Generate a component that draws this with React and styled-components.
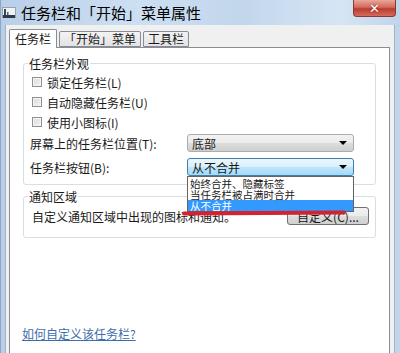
import React from 'react';
import styled, { createGlobalStyle } from 'styled-components';

const GlobalStyle = createGlobalStyle`
	html, body {
		margin: 0;
		padding: 0;
		background: #fff;
	}
	body {
		font-family: "Noto Sans CJK SC", "Noto Sans", sans-serif;
		font-size: 12px;
		color: #1a1a1a;
	}
`;

const Window = styled.div`
	width: 400px;
	height: 353px;
	overflow: hidden;
	display: flex;
	flex-direction: column;
	background: linear-gradient(to right, #b9cfe8, #cddff2 35%, #c2d6ec 60%, #d6e5f4 85%, #c0d4ea);
	border-left: 1px solid #8ea6c2;
	box-sizing: border-box;
`;

const TitleBar = styled.div`
	height: 25px;
	flex: none;
	display: flex;
	align-items: center;
	padding-left: 1px;
	position: relative;
`;

const Title = styled.div`
	font-size: 15px;
	color: #000;
	margin-left: 5px;
`;

const CloseButton = styled.div`
	position: absolute;
	top: 0;
	right: 4px;
	width: 43px;
	height: 17px;
	box-sizing: border-box;
	border: 1px solid #8a3a33;
	border-top: none;
	border-radius: 0 0 4px 4px;
	background: linear-gradient(to bottom, #e9a898, #d26a5c 45%, #bb3b30 55%, #d46d5a);
	display: flex;
	align-items: center;
	justify-content: center;
	color: #fff;
	font-family: "DejaVu Sans", sans-serif;
	font-weight: bold;
	font-size: 13px;
	text-shadow: 0 0 2px #7a1f18;
`;

const Frame = styled.div`
	flex: 1;
	display: flex;
	padding: 0 5px 0 4px;
	min-height: 0;
`;

const Client = styled.div`
	flex: 1;
	display: flex;
	flex-direction: column;
	background: #f0f0f0;
	padding: 4px 4px 0 3px;
	border-left: 1px solid #9fb2c8;
	border-right: 1px solid #9fb2c8;
`;

const TabStrip = styled.div`
	display: flex;
	align-items: flex-end;
	height: 18px;
	position: relative;
	z-index: 1;
`;

const Tab = styled.div`
	box-sizing: border-box;
	height: ${(p) => (p.$active ? '19px' : '16px')};
	margin-bottom: ${(p) => (p.$active ? '-1px' : '0')};
	margin-right: 2px;
	padding: 0 ${(p) => (p.$active ? '5px' : '4px')};
	border: 1px solid #898c95;
	border-bottom: ${(p) => (p.$active ? 'none' : '1px solid #898c95')};
	border-radius: 2px 2px 0 0;
	background: ${(p) => (p.$active ? '#fff' : 'linear-gradient(to bottom, #f3f3f3, #e3e3e3)')};
	font-size: 12px;
	line-height: ${(p) => (p.$active ? '18px' : '14px')};
	white-space: nowrap;
`;

const Panel = styled.div`
	flex: 1;
	display: flex;
	flex-direction: column;
	background: #fff;
	border: 1px solid #898c95;
	border-bottom: none;
	padding: 7px 13px 11px 13px;
	position: relative;
`;

const Group = styled.fieldset`
	margin: 0;
	padding: 0 6px ${(p) => p.$bottom || '8px'} 6px;
	border: 1px solid #d5dfe5;
	border-radius: 3px;
	& + & {
		margin-top: 3px;
	}
`;

const Legend = styled.legend`
	padding: 0 1px;
	margin-left: -2px;
	font-size: 12px;
	line-height: 17px;
`;

const CheckRow = styled.label`
	display: flex;
	align-items: center;
	height: 20px;
	padding-left: 2px;
	font-size: 12px;
`;

const Box = styled.span`
	width: 10px;
	height: 10px;
	box-sizing: border-box;
	border: 1px solid #8f8f8f;
	background: linear-gradient(135deg, #d9d9d9, #f4f4f4);
	box-shadow: inset 0 0 0 1px #f6f6f6;
	margin-right: 5px;
`;

const SelectRow = styled.div`
	display: flex;
	align-items: center;
	height: 18px;
	margin-top: ${(p) => p.$top || '2px'};
`;

const RowLabel = styled.div`
	width: 157px;
	font-size: 12px;
`;

const SelectWrap = styled.div`
	position: relative;
	width: 167px;
	height: 18px;
`;

const Select = styled.div`
	box-sizing: border-box;
	height: 100%;
	display: flex;
	align-items: center;
	justify-content: space-between;
	padding: 0 6px 0 4px;
	border: 1px solid ${(p) => (p.$focus ? '#3c7fb1' : '#acacac')};
	border-radius: 3px;
	background: ${(p) =>
		p.$focus
			? 'linear-gradient(to bottom, #eaf6fd, #d9f0fc 50%, #bee6fd 51%, #a7d9f5)'
			: 'linear-gradient(to bottom, #f2f2f2, #ebebeb 50%, #dddddd 51%, #cfcfcf)'};
	font-size: 12px;
`;

const Arrow = styled.span`
	width: 0;
	height: 0;
	border-left: 4px solid transparent;
	border-right: 4px solid transparent;
	border-top: 4px solid #000;
`;

const List = styled.div`
	position: absolute;
	left: 0;
	top: 100%;
	width: 100%;
	box-sizing: border-box;
	border: 1px solid #646464;
	background: #fff;
	z-index: 3;
	padding-top: 1px;
`;

const Item = styled.div`
	font-size: 10.5px;
	line-height: 11px;
	height: 11px;
	padding-left: 2px;
	background: ${(p) => (p.$selected ? '#3399ff' : 'transparent')};
	color: ${(p) => (p.$selected ? '#fff' : '#1a1a1a')};
	white-space: nowrap;
`;

const Mark = styled.div`
	position: absolute;
	left: -6px;
	bottom: -4px;
	width: 164px;
	height: 4px;
	background: #d2232e;
	border-radius: 2px;
	transform: rotate(-0.4deg);
	z-index: 4;
`;

const NotifyRow = styled.div`
	display: flex;
	align-items: center;
	justify-content: space-between;
	height: 22px;
	padding-left: 2px;
	font-size: 12px;
`;

const Button = styled.div`
	box-sizing: border-box;
	width: 82px;
	height: 18px;
	border: 1px solid #707070;
	border-radius: 3px;
	background: linear-gradient(to bottom, #f2f2f2, #ebebeb 50%, #dddddd 51%, #cfcfcf);
	display: flex;
	align-items: center;
	justify-content: center;
	font-size: 12px;
	white-space: nowrap;
`;

const HelpLink = styled.a`
	margin-top: auto;
	margin-left: -1px;
	color: #3c6eaa;
	text-decoration: underline;
	font-size: 12px;
	line-height: 17px;
	cursor: pointer;
`;

const AppIcon = () => (
	<svg width="14" height="13" viewBox="0 0 14 13">
		<rect x="0.5" y="1.5" width="13" height="10" fill="#eef1f5" stroke="#9aa3ad" />
		<rect x="1" y="9" width="12" height="3" fill="#2f3b4a" />
		<rect x="2" y="3" width="2" height="6" fill="#3c4654" />
		<rect x="5" y="6" width="1.5" height="3" fill="#5a6573" />
	</svg>
);

export default function App() {
	return (
		<>
			<GlobalStyle />
			<Window>
				<TitleBar>
					<AppIcon />
					<Title>任务栏和「开始」菜单属性</Title>
					<CloseButton>✕</CloseButton>
				</TitleBar>
				<Frame>
					<Client>
						<TabStrip>
							<Tab $active>任务栏</Tab>
							<Tab>「开始」菜单</Tab>
							<Tab>工具栏</Tab>
						</TabStrip>
						<Panel>
							<Group>
								<Legend>任务栏外观</Legend>
								<CheckRow>
									<Box />
									锁定任务栏(L)
								</CheckRow>
								<CheckRow>
									<Box />
									自动隐藏任务栏(U)
								</CheckRow>
								<CheckRow>
									<Box />
									使用小图标(I)
								</CheckRow>
								<SelectRow $top="2px">
									<RowLabel>屏幕上的任务栏位置(T):</RowLabel>
									<SelectWrap>
										<Select>
											底部
											<Arrow />
										</Select>
									</SelectWrap>
								</SelectRow>
								<SelectRow $top="6px">
									<RowLabel>任务栏按钮(B):</RowLabel>
									<SelectWrap>
										<Select $focus>
											从不合并
											<Arrow />
										</Select>
										<List>
											<Item>始终合并、隐藏标签</Item>
											<Item>当任务栏被占满时合并</Item>
											<Item $selected>从不合并</Item>
											<Mark />
										</List>
									</SelectWrap>
								</SelectRow>
							</Group>
							<Group $bottom="10px">
								<Legend>通知区域</Legend>
								<NotifyRow>
									自定义通知区域中出现的图标和通知。
									<Button>自定义(C)...</Button>
								</NotifyRow>
							</Group>
							<HelpLink>如何自定义该任务栏?</HelpLink>
						</Panel>
					</Client>
				</Frame>
			</Window>
		</>
	);
}
